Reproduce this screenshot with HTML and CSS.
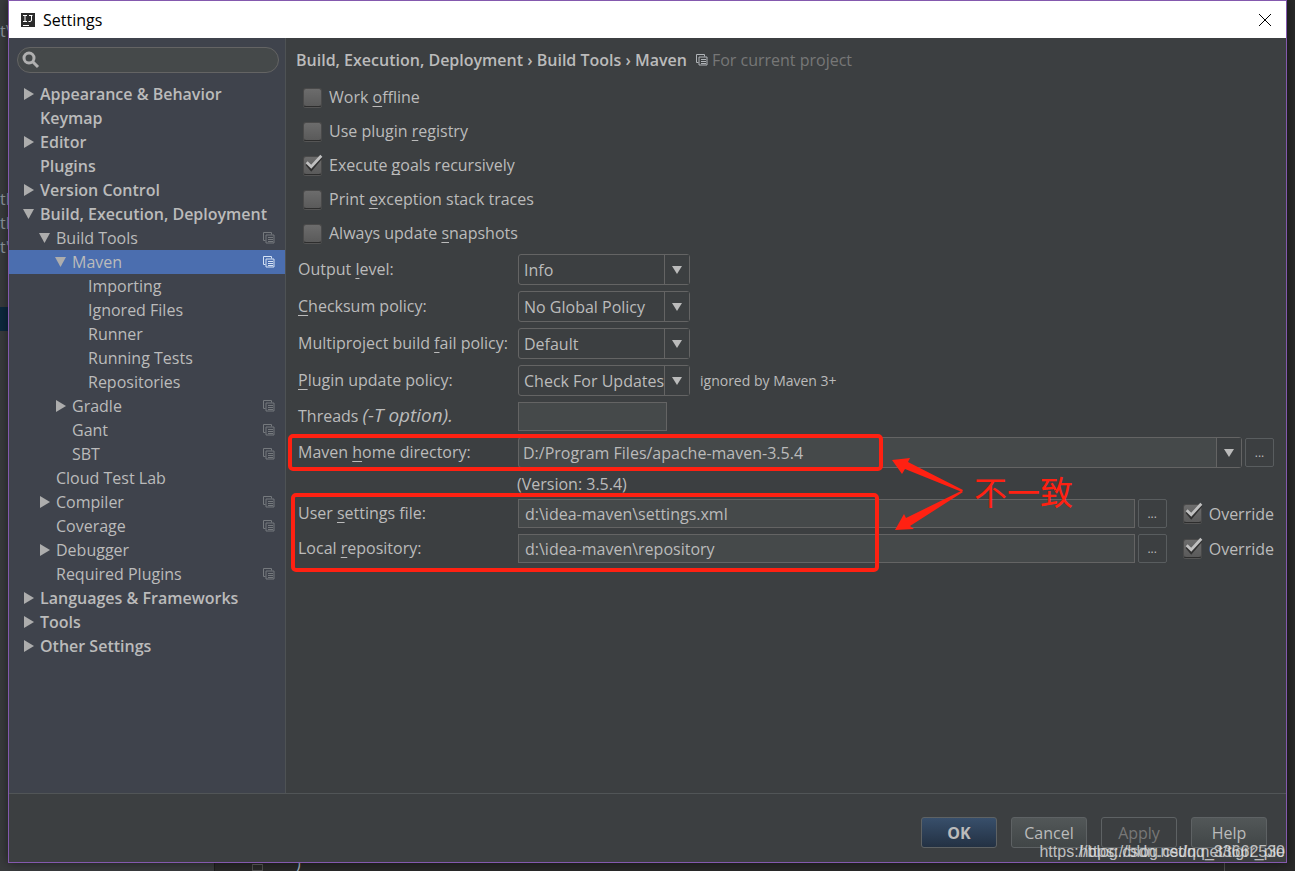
FILE: index.html
```html
<!DOCTYPE html>
<html lang="en">

<head>
    <meta charset="UTF-8">
    <meta name="viewport" content="width=device-width, initial-scale=1.0">
    <title>Settings</title>
    <link rel="stylesheet" href="styles.css">
</head>

<body>
    <!-- Shared icons -->
    <svg class="defs" width="0" height="0">
        <symbol id="scope" viewBox="0 0 12 12">
            <path d="M2.500 8.500H.5V.5H8.500V2.500" fill="none" stroke="currentColor" />
            <path d="M3 3H11V11H3ZM5 5.500H10M5 7.500H10M5 9.500H10" fill="none" stroke="currentColor" />
        </symbol>
        <symbol id="tick" viewBox="0 0 24 24">
            <path d="M4 12L9 18L20 5" fill="none" stroke="#303030" stroke-width="3" />
            <path d="M4 10L9 15L20 3" fill="none" stroke="#c0c0c0" stroke-width="3" />
        </symbol>
        <symbol id="down" viewBox="0 0 10 8">
            <path d="M0 0H10L5 8Z" fill="currentColor" />
        </symbol>
        <symbol id="closed" viewBox="0 0 12 12">
            <path d="M1 0L11 6L1 12Z" fill="currentColor" />
        </symbol>
        <symbol id="open" viewBox="0 0 12 12">
            <path d="M0 1H11L5.500 11Z" fill="currentColor" />
        </symbol>
    </svg>

    <!-- Editor behind the dialog -->
    <div class="editor">
        <span class="code c1">t\</span>
        <span class="code c2">tl</span>
        <span class="code c3">tl</span>
        <span class="code c4">t'</span>
        <span class="caret-row"></span>
        <div class="editor-bottom">
            <span class="fold"></span>
            <span class="brace">)</span>
        </div>
    </div>

    <div class="window">
        <div class="titlebar">
            <svg class="logo" viewBox="0 0 14 14">
                <rect width="14" height="14" fill="#2b2b2b" />
                <path d="M2 2.500H6M4 2.500V8.500M2 8.500H6M8 2.500H11.500M10.500 2.500V7Q10.500 8.500 9 8.500H7.500M2 12.500H8" fill="none" stroke="#fff" />
            </svg>
            <span class="title">Settings</span>
            <button class="close" aria-label="Close">
                <svg width="12" height="12" viewBox="0 0 12 12">
                    <path d="M0 0L12 12M12 0L0 12" stroke="#000" fill="none" />
                </svg>
            </button>
        </div>

        <div class="body">
            <div class="sidebar">
                <div class="search">
                    <svg width="18" height="18" viewBox="0 0 18 18">
                        <circle cx="7" cy="7" r="5" fill="none" stroke="#b0b0b0" stroke-width="3" />
                        <path d="M11 11L16 16" stroke="#b0b0b0" stroke-width="3" />
                    </svg>
                    <input type="text" aria-label="Search settings">
                </div>
                <ul class="tree">
                    <li class="top"><svg class="tri"><use href="#closed" /></svg>Appearance &amp; Behavior</li>
                    <li class="top"><span class="tri"></span>Keymap</li>
                    <li class="top"><svg class="tri"><use href="#closed" /></svg>Editor</li>
                    <li class="top"><span class="tri"></span>Plugins</li>
                    <li class="top"><svg class="tri"><use href="#closed" /></svg>Version Control</li>
                    <li class="top"><svg class="tri"><use href="#open" /></svg>Build, Execution, Deployment</li>
                    <li class="l2"><svg class="tri"><use href="#open" /></svg>Build Tools<svg class="scope"><use href="#scope" /></svg></li>
                    <li class="l3 selected"><svg class="tri"><use href="#open" /></svg>Maven<svg class="scope"><use href="#scope" /></svg></li>
                    <li class="l4"><span class="tri"></span>Importing</li>
                    <li class="l4"><span class="tri"></span>Ignored Files</li>
                    <li class="l4"><span class="tri"></span>Runner</li>
                    <li class="l4"><span class="tri"></span>Running Tests</li>
                    <li class="l4"><span class="tri"></span>Repositories</li>
                    <li class="l3"><svg class="tri"><use href="#closed" /></svg>Gradle<svg class="scope"><use href="#scope" /></svg></li>
                    <li class="l3"><span class="tri"></span>Gant<svg class="scope"><use href="#scope" /></svg></li>
                    <li class="l3"><span class="tri"></span>SBT<svg class="scope"><use href="#scope" /></svg></li>
                    <li class="l2"><span class="tri"></span>Cloud Test Lab</li>
                    <li class="l2"><svg class="tri"><use href="#closed" /></svg>Compiler<svg class="scope"><use href="#scope" /></svg></li>
                    <li class="l2"><span class="tri"></span>Coverage<svg class="scope"><use href="#scope" /></svg></li>
                    <li class="l2"><svg class="tri"><use href="#closed" /></svg>Debugger</li>
                    <li class="l2"><span class="tri"></span>Required Plugins<svg class="scope"><use href="#scope" /></svg></li>
                    <li class="top"><svg class="tri"><use href="#closed" /></svg>Languages &amp; Frameworks</li>
                    <li class="top"><svg class="tri"><use href="#closed" /></svg>Tools</li>
                    <li class="top"><svg class="tri"><use href="#closed" /></svg>Other Settings</li>
                </ul>
            </div>

            <div class="content">
                <div class="breadcrumb">
                    <strong>Build, Execution, Deployment › Build Tools › Maven</strong>
                    <svg class="scope"><use href="#scope" /></svg>
                    <span>For current project</span>
                </div>

                <div class="checks">
                    <label class="check"><span class="box"><input type="checkbox"><svg><use href="#tick" /></svg></span><span>Work <u>o</u>ffline</span></label>
                    <label class="check"><span class="box"><input type="checkbox"><svg><use href="#tick" /></svg></span><span>Use plugin <u>r</u>egistry</span></label>
                    <label class="check"><span class="box"><input type="checkbox" checked><svg><use href="#tick" /></svg></span><span>Execute <u>g</u>oals recursively</span></label>
                    <label class="check"><span class="box"><input type="checkbox"><svg><use href="#tick" /></svg></span><span>Print <u>e</u>xception stack traces</span></label>
                    <label class="check"><span class="box"><input type="checkbox"><svg><use href="#tick" /></svg></span><span>Always update <u>s</u>napshots</span></label>
                </div>

                <div class="row">
                    <label for="output">Output <u>l</u>evel:</label>
                    <div class="combo"><select id="output"><option>Info</option></select><span class="arrow"><svg><use href="#down" /></svg></span></div>
                </div>
                <div class="row">
                    <label for="checksum"><u>C</u>hecksum policy:</label>
                    <div class="combo"><select id="checksum"><option>No Global Policy</option></select><span class="arrow"><svg><use href="#down" /></svg></span></div>
                </div>
                <div class="row">
                    <label for="fail">Multiproject build <u>f</u>ail policy:</label>
                    <div class="combo"><select id="fail"><option>Default</option></select><span class="arrow"><svg><use href="#down" /></svg></span></div>
                </div>
                <div class="row">
                    <label for="update"><u>P</u>lugin update policy:</label>
                    <div class="combo"><select id="update"><option>Check For Updates</option></select><span class="arrow"><svg><use href="#down" /></svg></span></div>
                    <span class="note">ignored by Maven 3+</span>
                </div>
                <div class="row">
                    <label for="threads">Threads <i>(-T option).</i></label>
                    <input class="field short" type="text" id="threads">
                </div>
                <div class="row">
                    <label for="home">Maven <u>h</u>ome directory:</label>
                    <div class="combo editable"><input type="text" id="home" value="D:/Program Files/apache-maven-3.5.4"><span class="arrow"><svg><use href="#down" /></svg></span></div>
                    <button class="browse">...</button>
                </div>
                <div class="version">(Version: 3.5.4)</div>
                <div class="row">
                    <label for="settings">User <u>s</u>ettings file:</label>
                    <input class="field" type="text" id="settings" value="d:\idea-maven\settings.xml">
                    <button class="browse">...</button>
                    <label class="check override"><span class="box"><input type="checkbox" checked><svg><use href="#tick" /></svg></span><span>Override</span></label>
                </div>
                <div class="row">
                    <label for="repo">Local <u>r</u>epository:</label>
                    <input class="field" type="text" id="repo" value="d:\idea-maven\repository">
                    <button class="browse">...</button>
                    <label class="check override"><span class="box"><input type="checkbox" checked><svg><use href="#tick" /></svg></span><span>Override</span></label>
                </div>

                <!-- Red notes drawn over the form -->
                <svg class="marks" width="800" height="150" viewBox="0 0 800 150">
                    <rect x="4" y="6" width="591" height="33" rx="3" />
                    <rect x="7" y="65" width="584" height="75" rx="3" />
                    <path d="M606 30L624 28L622 32L677 60L676 62L619 39L616 44Z" />
                    <path d="M609 100L618 84L620 88L675 61L677 62L624 96L628 99Z" />
                    <text x="688" y="75">不一致</text>
                </svg>
            </div>
        </div>

        <div class="footer">
            <button class="btn ok">OK</button>
            <button class="btn">Cancel</button>
            <button class="btn" disabled>Apply</button>
            <button class="btn">Help</button>
        </div>
    </div>

    <span class="watermark">https://blog.csdn.net/qq_33662530</span>
    <span class="watermark">https://blog.csdn.net/tigrr_pie</span>
</body>

</html>
```
FILE: styles.css
```css
* {
    box-sizing: border-box;
}

body {
    margin: 0;
    min-height: 100vh;
    display: flex;
    padding: 0 8px 8px;
    background-color: #2b2b2b;
    color: #bbbbbb;
    font-family: "Open Sans", "Noto Sans CJK SC", sans-serif;
    font-size: 16px;
    line-height: 24px;
}

input, select, button {
    font: inherit;
    color: inherit;
    margin: 0;
}

u {
    text-decoration-skip-ink: none;
    text-underline-offset: 3px;
}

.defs {
    position: absolute;
}

/* Editor behind the dialog */
.editor {
    position: absolute;
    inset: 0;
    overflow: hidden;
    background: linear-gradient(90deg, #393b3d 214px, #292929 214px);
}

.code {
    position: absolute;
    left: 0;
    color: #8f979e;
}

.c1 { top: 19px; }
.c2 { top: 187px; }
.c3 { top: 211px; }
.c4 { top: 235px; }

.caret-row {
    position: absolute;
    top: 307px;
    left: 0;
    width: 9px;
    height: 24px;
    background-color: #0d293e;
}

.editor-bottom {
    position: absolute;
    left: 214px;
    right: 70px;
    bottom: 0;
    height: 8px;
    padding-left: 37px;
    display: flex;
    align-items: flex-end;
    border-left: 1px solid #1d1d1d;
    border-right: 1px solid #505050;
}

.fold {
    width: 11px;
    height: 7px;
    border: 1px solid #505050;
    border-top-color: #606060;
}

.brace {
    margin-left: 33px;
    line-height: 15px;
    color: #a9b7c6;
}

/* Dialog */
.window {
    position: relative;
    flex: 1;
    min-width: 0;
    display: flex;
    flex-direction: column;
    border: 1px solid #8459ae;
    background-color: #3c3f41;
    box-shadow: 0 0 10px rgba(0, 0, 0, 0.5);
}

.titlebar {
    height: 37px;
    display: flex;
    align-items: center;
    padding: 0 15px 0 12px;
    background-color: #fff;
    color: #000;
}

.logo {
    width: 14px;
    height: 14px;
    margin-right: 8px;
}

.title {
    flex: 1;
}

.close {
    display: flex;
    padding: 0;
    border: none;
    background: none;
}

.body {
    flex: 1;
    display: flex;
}

.sidebar {
    width: 277px;
    flex-shrink: 0;
    padding-top: 9px;
    background-color: #3f434c;
    border-right: 1px solid #4e5254;
}

.search {
    height: 26px;
    margin: 0 6px 9px 8px;
    padding: 0 4px;
    display: flex;
    align-items: center;
    border: 1px solid #646464;
    border-radius: 13px;
    background-color: #45494a;
}

.search input {
    flex: 1;
    min-width: 0;
    border: none;
    outline: none;
    background: none;
}

.tree {
    list-style: none;
    margin: 0;
    padding: 0;
    white-space: nowrap;
}

.tree li {
    height: 24px;
    display: flex;
    align-items: center;
    padding-right: 10px;
    padding-left: 14px;
}

.tree .top { font-weight: 600; }
.tree .l2 { padding-left: 30px; }
.tree .l3 { padding-left: 46px; }
.tree .l4 { padding-left: 62px; }

.tree .selected {
    background-color: #4b6eaf;
}

.tri {
    width: 12px;
    height: 12px;
    flex-shrink: 0;
    margin-right: 5px;
    color: #adadad;
}

.scope {
    width: 12px;
    height: 12px;
    color: #75797d;
}

.tree .scope {
    margin-left: auto;
}

.selected .scope {
    color: #d5e2f5;
}

/* Maven page */
.content {
    position: relative;
    flex: 1;
    min-width: 0;
    padding: 10px 12px 0;
}

.breadcrumb {
    display: flex;
    align-items: center;
    height: 24px;
    margin: 0 0 8px -2px;
}

.breadcrumb strong {
    font-weight: 600;
}

.breadcrumb .scope {
    margin: 0 4px 0 9px;
    color: #b0b4b8;
}

.breadcrumb span {
    color: #777777;
}

.checks {
    padding-left: 5px;
    margin-bottom: 4px;
}

.check {
    display: flex;
    align-items: center;
    height: 34px;
}

.box {
    position: relative;
    width: 19px;
    height: 19px;
    margin-right: 7px;
}

.box input {
    display: block;
    appearance: none;
    width: 19px;
    height: 19px;
    border: 1px solid #4a4a4a;
    border-bottom-color: #2d2d2d;
    border-radius: 3px;
    background: linear-gradient(#6c6c6c, #5a5a5a);
    box-shadow: 0 1px #555;
}

.box svg {
    display: none;
    position: absolute;
    left: 0;
    top: -3px;
    width: 22px;
    height: 22px;
    pointer-events: none;
}

.box input:checked + svg {
    display: block;
}

.row {
    display: flex;
    align-items: center;
    margin-bottom: 6px;
}

.row > label:first-child {
    width: 220px;
    flex-shrink: 0;
    padding-bottom: 2px;
}

.row i {
    font-size: 19px;
}

.combo {
    position: relative;
    display: flex;
    width: 172px;
    height: 31px;
    border: 1px solid #646464;
    border-radius: 3px;
    background-color: #3c3f41;
}

.combo select {
    appearance: none;
    width: 100%;
    padding: 0 24px 0 5px;
    border: none;
    outline: none;
    background: none;
}

.arrow {
    position: absolute;
    right: 0;
    top: 0;
    bottom: 0;
    width: 25px;
    display: flex;
    align-items: center;
    justify-content: center;
    border-left: 1px solid #646464;
    background-color: #3c3f41;
    pointer-events: none;
}

.arrow svg {
    width: 10px;
    height: 8px;
}

.editable {
    flex: 1;
    background-color: #45494a;
}

.editable input {
    flex: 1;
    min-width: 0;
    padding: 0 28px 0 4px;
    border: none;
    outline: none;
    background: none;
}

.note {
    margin-left: 10px;
    font-size: 14px;
}

.field {
    flex: 1;
    min-width: 0;
    height: 29px;
    padding: 0 6px;
    border: 1px solid #646464;
    background-color: #45494a;
    outline: none;
}

.short {
    flex: none;
    width: 149px;
}

.browse {
    width: 29px;
    height: 29px;
    margin-left: 3px;
    padding: 0;
    border: 1px solid #595d5f;
    border-radius: 2px;
    background-color: #3c3f41;
    font-size: 12px;
}

.version {
    height: 24px;
    margin: -2px 0 3px 219px;
}

.override {
    height: 29px;
    padding: 0 0 0 16px;
}

.marks {
    position: absolute;
    left: 0;
    top: 392px;
    pointer-events: none;
    fill: #ff2112;
    font-family: "Noto Sans CJK SC", sans-serif;
    font-size: 33px;
}

.marks rect {
    fill: none;
    stroke: #ff2112;
    stroke-width: 4px;
}

.footer {
    display: flex;
    justify-content: flex-end;
    gap: 14px;
    padding: 23px 19px 14px;
    border-top: 1px solid #515557;
}

.btn {
    width: 76px;
    height: 31px;
    padding: 0;
    border: 1px solid #5e6264;
    border-radius: 3px;
    background: linear-gradient(#525758, #414647);
}

.ok {
    background: linear-gradient(#384f6b, #233143);
    font-weight: bold;
}

.btn:disabled {
    background: none;
    color: #777777;
}

.watermark {
    position: absolute;
    right: 10px;
    bottom: 7px;
    font-family: "Liberation Sans", sans-serif;
    font-size: 16px;
    color: rgba(225, 225, 225, 0.8);
}
```
